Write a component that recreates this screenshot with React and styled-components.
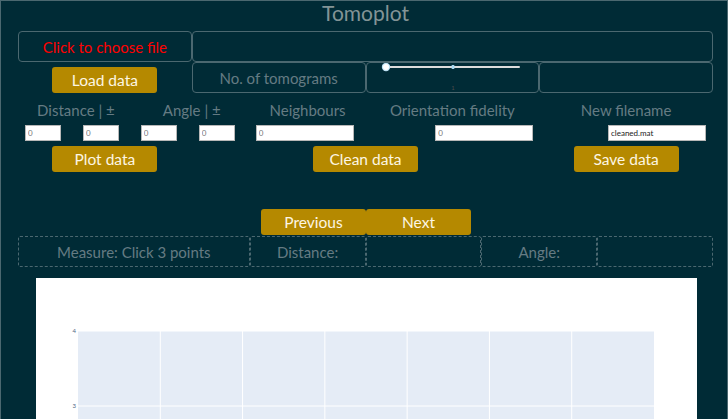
import React from "react";
import styled, { createGlobalStyle } from "styled-components";

const Global = createGlobalStyle`
  html, body { margin: 0; padding: 0; background: #002b36; }
  body { font-family: "Lato", "Open Sans", sans-serif; }
  * { box-sizing: border-box; }
`;

const Page = styled.div`
  min-height: 419px;
  height: 419px;
  overflow: hidden;
  border: 1px solid #4b6870;
  border-bottom: none;
  padding: 0 14px 0 17px;
  background: #002b36;
`;

const Title = styled.h1`
  margin: 0;
  height: 30px;
  line-height: 23px;
  text-align: center;
  font-weight: 400;
  font-size: 21px;
  color: #839496;
`;

const Grid4 = styled.div`
  display: grid;
  grid-template-columns: repeat(4, 1fr);
  margin-top: ${(p) => p.$mt || 0}px;
`;

const Box = styled.div`
  height: 31px;
  border: 1px solid #4b6870;
  border-radius: ${(p) => (p.$dashed ? 2 : 4)}px;
  border-style: ${(p) => (p.$dashed ? "dashed" : "solid")};
  grid-column: ${(p) => p.$span || "auto"};
  display: flex;
  align-items: center;
  justify-content: center;
  font-size: 15px;
  color: ${(p) => (p.$red ? "#ff0000" : "#657b83")};
  position: relative;
`;

const Button = styled.button`
  width: 105px;
  height: 26px;
  border: none;
  border-radius: 3px;
  background: #b58900;
  color: #fdf6e3;
  font-family: "Lato", "Open Sans", sans-serif;
  font-size: 15.5px;
  padding: 0;
  justify-self: center;
  align-self: end;
  grid-column: ${(p) => p.$span || "auto"};
`;

const LabelRow = styled.div`
  display: grid;
  grid-template-columns: 1fr 1fr 1fr 1.5fr 1.5fr;
  margin-top: 5px;
`;

const Label = styled.div`
  text-align: center;
  line-height: 24px;
  font-size: 15px;
  color: #657b83;
`;

const InputRow = styled.div`
  display: grid;
  grid-template-columns: 1fr 1fr 1fr 1.5fr 1.5fr;
  margin-top: 3px;
  height: 16px;
`;

const Pair = styled.div`
  display: grid;
  grid-template-columns: 1fr 1fr;
`;

const Field = styled.input`
  width: ${(p) => p.$w}px;
  height: 16px;
  border: 1px solid #b8b8b8;
  background: #fff;
  font-family: "Lato", sans-serif;
  font-size: 8px;
  color: ${(p) => (p.$dark ? "#222" : "#777")};
  padding: 0 2px;
  margin: 0 ${(p) => p.$mr || 0}px 0 ${(p) => p.$ml || 0}px;
  justify-self: ${(p) => p.$align || "start"};
  outline: none;
`;

const ButtonRow = styled(Grid4)`
  height: 26px;
  margin-top: 5px;
`;

const NavRow = styled.div`
  display: flex;
  justify-content: center;
  margin-top: 37px;
  padding-left: 1px;
`;

const MeasureRow = styled.div`
  display: grid;
  grid-template-columns: repeat(6, 1fr);
  margin-top: 1px;
`;

const PlotCard = styled.div`
  margin: 11px 16px 0 18px;
  background: #fff;
  height: 450px;
`;

const SliderSvg = styled.svg`
  position: absolute;
  left: 0;
  top: 0;
`;

function Slider() {
  return (
    <SliderSvg width="172" height="30" viewBox="0 0 172 30">
      <rect x="19" y="3" width="134" height="2" rx="1" fill="#dcdcdc" />
      <circle cx="19" cy="4" r="4.2" fill="#bfe3f6" />
      <circle cx="19" cy="4" r="3" fill="#ffffff" />
      <rect x="84.5" y="2" width="3" height="4" rx="1" fill="#abdbf3" />
      <text x="86" y="27" fontSize="6" fill="#4a4a4a" textAnchor="middle" fontFamily="Lato, sans-serif">1</text>
    </SliderSvg>
  );
}

function Chart() {
  const left = 42, top = 53, w = 576, h = 400;
  const vx = Array.from({ length: 6 }, (_, i) => left + (w / 7) * (i + 1));
  const hy = [top, top + 75, top + 150, top + 225, top + 300];
  return (
    <svg width="661" height="450" viewBox="0 0 661 450">
      <rect x={left} y={top} width={w} height={h} fill="#e5ecf6" />
      {vx.map((x) => (
        <line key={x} x1={x} x2={x} y1={top} y2={top + h} stroke="#ffffff" strokeWidth="1" />
      ))}
      {hy.map((y) => (
        <line key={y} x1={left} x2={left + w} y1={y} y2={y} stroke="#ffffff" strokeWidth="1" />
      ))}
      <text x="40" y={top + 2} fontSize="6" fill="#506784" textAnchor="end" fontFamily="Lato, sans-serif">4</text>
      <text x="40" y={top + 77} fontSize="6" fill="#506784" textAnchor="end" fontFamily="Lato, sans-serif">3</text>
    </svg>
  );
}

export default function App() {
  return (
    <>
      <Global />
      <Page>
        <Title>Tomoplot</Title>
        <Grid4>
          <Box $red>Click to choose file</Box>
          <Box $span="2 / 5" />
        </Grid4>
        <Grid4>
          <Button>Load data</Button>
          <Box>No. of tomograms</Box>
          <Box>
            <Slider />
          </Box>
          <Box />
        </Grid4>
        <LabelRow>
          <Label>Distance | ±</Label>
          <Label>Angle | ±</Label>
          <Label>Neighbours</Label>
          <Label>Orientation fidelity</Label>
          <Label>New filename</Label>
        </LabelRow>
        <InputRow>
          <Pair>
            <Field $w={36} $ml={7} defaultValue="0" />
            <Field $w={36} $ml={7} defaultValue="0" />
          </Pair>
          <Pair>
            <Field $w={36} $ml={7} defaultValue="0" />
            <Field $w={36} $ml={7} defaultValue="0" />
          </Pair>
          <Field $w={98} $ml={6} defaultValue="0" />
          <Field $w={98} $mr={6} $align="end" defaultValue="0" />
          <Field $w={98} $mr={7} $align="end" $dark defaultValue="cleaned.mat" />
        </InputRow>
        <ButtonRow>
          <Button>Plot data</Button>
          <Button $span="2 / 4">Clean data</Button>
          <Button>Save data</Button>
        </ButtonRow>
        <NavRow>
          <Button>Previous</Button>
          <Button>Next</Button>
        </NavRow>
        <MeasureRow>
          <Box $dashed $span="1 / 3">Measure: Click 3 points</Box>
          <Box $dashed>Distance:</Box>
          <Box $dashed />
          <Box $dashed>Angle:</Box>
          <Box $dashed />
        </MeasureRow>
        <PlotCard>
          <Chart />
        </PlotCard>
      </Page>
    </>
  );
}
